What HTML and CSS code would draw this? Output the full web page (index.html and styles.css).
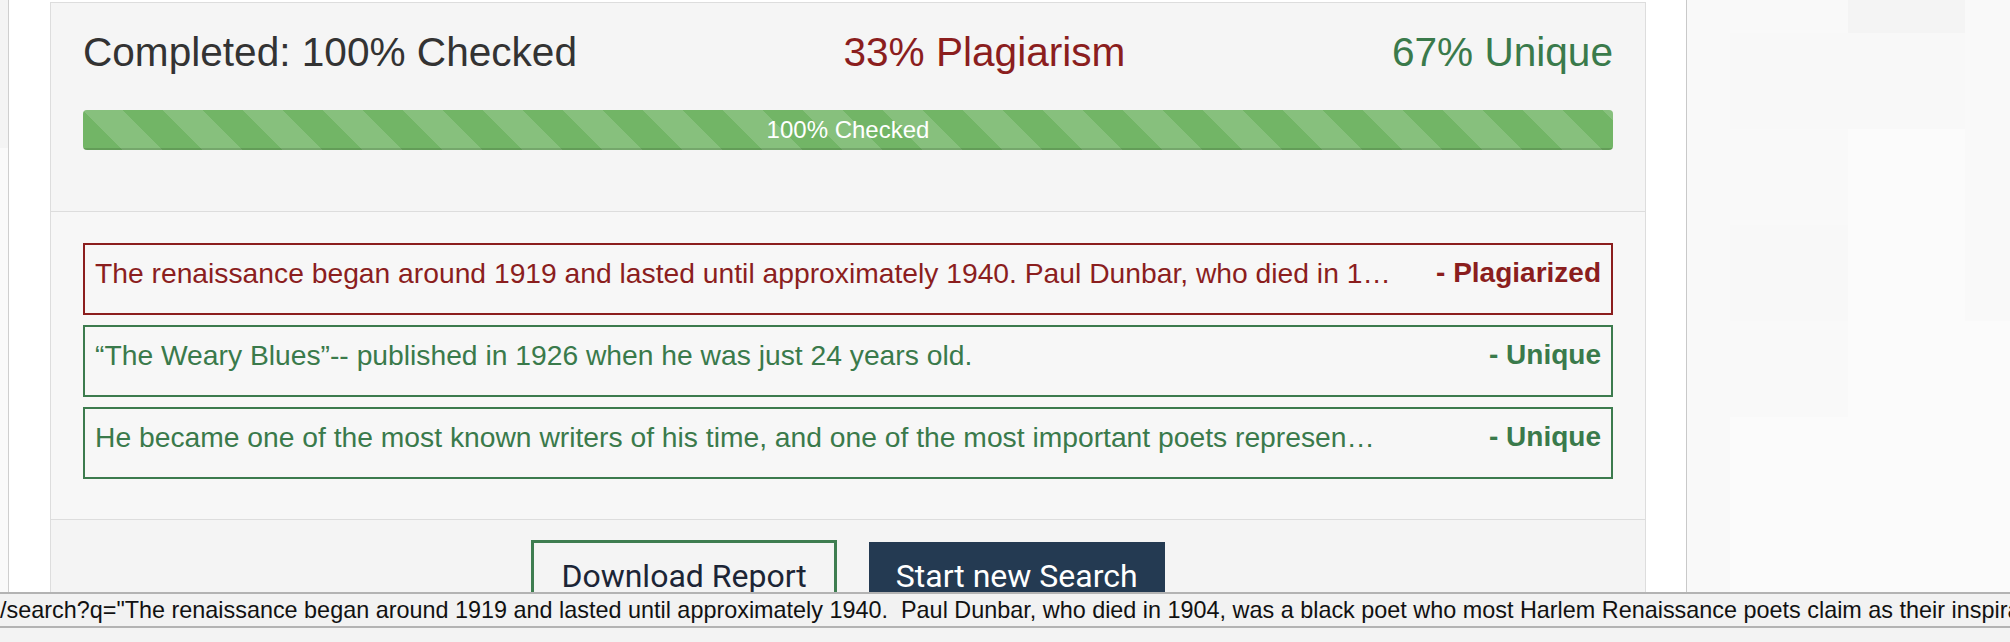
FILE: index.html
```html
<!DOCTYPE html>
<html lang="en">
<head>
  <meta charset="UTF-8">
  <title>Plagiarism Check Results</title>
  <meta name="viewport" content="width=device-width, initial-scale=1.0">
  <link rel="stylesheet" href="styles.css">
</head>
<body>
  <div class="layout">
    <!-- left gutter -->
    <div class="gutter-left">
      <div class="gutter-top"></div>
    </div>

    <!-- results panel -->
    <main class="main">
      <div class="panel">
        <div class="panel-heading">
          <div class="summary">
            <h3 class="summary-item">Completed: 100% Checked</h3>
            <h3 class="summary-item plagiarism">33% Plagiarism</h3>
            <h3 class="summary-item unique">67% Unique</h3>
          </div>
          <div class="progress">
            <div class="progress-bar">100% Checked</div>
          </div>
        </div>

        <div class="panel-body">
          <div class="result result-plagiarized">
            <span class="result-text">The renaissance began around 1919 and lasted until approximately 1940. Paul Dunbar, who died in 1…</span>
            <span class="result-label">- Plagiarized</span>
          </div>
          <div class="result result-unique">
            <span class="result-text">“The Weary Blues”-- published in 1926 when he was just 24 years old.</span>
            <span class="result-label">- Unique</span>
          </div>
          <div class="result result-unique">
            <span class="result-text">He became one of the most known writers of his time, and one of the most important poets represen…</span>
            <span class="result-label">- Unique</span>
          </div>
        </div>

        <div class="panel-footer">
          <button class="btn btn-outline">Download Report</button>
          <button class="btn btn-dark">Start new Search</button>
        </div>
      </div>
    </main>

    <!-- right sidebar, empty tiles -->
    <aside class="gutter-right">
      <div class="tile"></div><div class="tile"></div><div class="tile tile-dark"></div><div class="tile"></div>
      <div class="tile"></div><div class="tile tile-mid"></div><div class="tile tile-mid"></div><div class="tile"></div>
      <div class="tile"></div><div class="tile"></div><div class="tile tile-light"></div><div class="tile"></div>
      <div class="tile"></div><div class="tile tile-mid"></div><div class="tile tile-light"></div><div class="tile"></div>
      <div class="tile"></div><div class="tile"></div><div class="tile tile-light"></div><div class="tile tile-light"></div>
      <div class="tile"></div><div class="tile tile-light"></div><div class="tile tile-light"></div><div class="tile tile-light"></div>
      <div class="tile"></div><div class="tile tile-light"></div><div class="tile tile-light"></div><div class="tile tile-light"></div>
    </aside>
  </div>

  <!-- link preview bar -->
  <div class="status-bar">
    <div class="status-url">/search?q="The renaissance began around 1919 and lasted until approximately 1940.&nbsp; Paul Dunbar, who died in 1904, was a black poet who most Harlem Renaissance poets claim as their inspiration."</div>
  </div>
</body>
</html>
```

FILE: styles.css
```css
* { box-sizing: border-box; margin: 0; padding: 0; }
body {
  font-family: 'Liberation Sans', Arial, sans-serif;
  background: #fff;
  color: #333;
  overflow: hidden;
}
.layout {
  display: flex;
  min-height: 642px;
}

/* gutters */
.gutter-left {
  width: 9px;
  border-right: 1px solid #cfcfcf;
  background: #fafafa;
}
.gutter-top {
  height: 148px;
  background: #f4f4f4;
}
.gutter-right {
  width: 324px;
  border-left: 1px solid #c9c9c9;
  display: grid;
  grid-template-columns: 43px 118px 117px 1fr;
  grid-template-rows: 33px repeat(6, 96px);
  background: #fafafa;
}
.tile { background: #f9f9f9; }
.tile-dark { background: #f4f4f4; }
.tile-mid { background: #f8f8f8; }
.tile-light { background: #fbfbfb; }

.main {
  flex: 1;
  padding: 2px 40px 0 41px;
}

/* panel */
.panel {
  border: 1px solid #ddd;
  background: #f7f7f7;
}
.panel-heading {
  background: #f5f5f5;
  padding: 27px 32px 61px;
  border-bottom: 1px solid #ddd;
}
.summary {
  display: flex;
  justify-content: space-between;
}
.summary-item {
  font-size: 40.6px;
  font-weight: normal;
  line-height: 44px;
  color: #333;
}
.plagiarism { color: #8b1e1e; }
.unique { color: #3a7a4b; }

.progress {
  margin-top: 36px;
  height: 40px;
  border-radius: 4px;
  background: #f5f5f5;
  overflow: hidden;
}
.progress-bar {
  height: 100%;
  background-color: #72b566;
  background-image: linear-gradient(45deg, rgba(255,255,255,.15) 25%, transparent 25%, transparent 50%, rgba(255,255,255,.15) 50%, rgba(255,255,255,.15) 75%, transparent 75%, transparent);
  background-size: 80px 80px;
  box-shadow: inset 0 -2px 0 rgba(0,0,0,.13);
  color: #fff;
  font-size: 24px;
  line-height: 40px;
  text-align: center;
}

.panel-body {
  padding: 31px 32px 30px;
}
.result {
  display: flex;
  justify-content: space-between;
  border: 2px solid;
  padding: 8px 10px 20px;
  margin-bottom: 10px;
  font-size: 28.25px;
  line-height: 40px;
  white-space: nowrap;
}
.result-text {
  overflow: hidden;
}
.result-label {
  font-weight: bold;
  font-size: 28px;
  margin-left: 40px;
}
.result-plagiarized {
  border-color: #8b1e1e;
  color: #8b1e1e;
}
.result-unique {
  border-color: #3c7b4e;
  color: #3a7a4b;
}

.panel-footer {
  background: #f4f4f4;
  border-top: 1px solid #ddd;
  padding: 20px 32px 40px;
  display: flex;
  justify-content: center;
  align-items: center;
  gap: 32px;
}
.btn {
  font-family: Roboto, 'Liberation Sans', sans-serif;
  font-size: 32px;
  line-height: 43px;
  padding: 12px 27px;
  cursor: pointer;
}
.btn-outline {
  background: transparent;
  border: 3px solid #3e7d50;
  color: #1c2536;
}
.btn-dark {
  background: #243a52;
  border: 1px solid #243a52;
  color: #fff;
  padding: 12px 26px;
}

/* hovered link url, drawn over the page */
.status-bar {
  position: fixed;
  left: 0;
  right: 0;
  bottom: 0;
  height: 50px;
  background: #f3f3f3;
}
.status-url {
  height: 36px;
  border-top: 2px solid #b3b3b3;
  border-bottom: 2px solid #b3b3b3;
  background: #f2f2f2;
  color: #111;
  font-size: 23.4px;
  line-height: 32px;
  white-space: nowrap;
  overflow: hidden;
}
```
